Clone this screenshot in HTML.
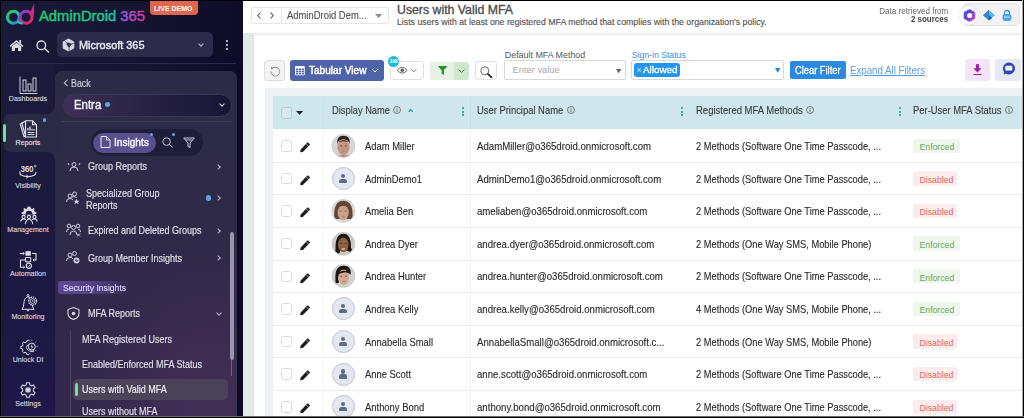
<!DOCTYPE html>
<html><head><meta charset="utf-8">
<style>
*{box-sizing:border-box;margin:0;padding:0}
html,body{width:1024px;height:418px;overflow:hidden;background:#fff;font-family:"Liberation Sans",sans-serif;position:relative}
.a{position:absolute}
.t{position:absolute;white-space:nowrap;line-height:1}
svg{position:absolute;overflow:visible}
/* sidebar */
#sb{position:absolute;left:0;top:0;width:243px;height:418px;background:linear-gradient(90deg,#1a1a39 0%,#151431 55%,#0e0c28 100%)}
#rail{position:absolute;left:0;top:64px;width:55px;height:354px;background:linear-gradient(180deg,#1b1a3a 0%,#1d1942 60%,#1f1848 100%)}
#panel{position:absolute;left:55px;top:71px;width:182px;height:350px;border-radius:7px 7px 0 0;background:radial-gradient(ellipse 120px 160px at 85% 95%,rgba(95,60,105,0.35),rgba(95,60,105,0) 100%),linear-gradient(180deg,#2c2b46 0%,#2f2a48 40%,#32294b 75%,#33294d 100%)}
#tile{position:absolute;left:4px;top:114px;width:56px;height:38px;border-radius:6px 0 0 6px;background:#2b2a45}
.rl{position:absolute;left:0;width:56px;text-align:center;font-size:7.1px;color:#d2d1de;line-height:1;white-space:nowrap;-webkit-text-stroke:0.15px #d2d1de}
.ni{position:absolute;font-size:10px;margin-top:-0.4px;transform:scaleX(0.9);transform-origin:left center;-webkit-text-stroke-width:0.15px;color:#e0dfe9;line-height:1;white-space:nowrap}
.chev{position:absolute;width:4px;height:4px;border-right:1.2px solid #b9b7c8;border-top:1.2px solid #b9b7c8;transform:rotate(45deg)}
/* content */
#hdr{position:absolute;left:243px;top:0;width:781px;height:33px;background:#fff;box-shadow:0 1px 2px rgba(0,0,0,.07)}
#cbg{position:absolute;left:243px;top:33px;width:11px;height:385px;background:#e3e8eb}
#tbox{position:absolute;left:265px;top:88px;width:759px;height:330px;background:#eef1f4}
#thead{position:absolute;left:273px;top:96px;width:751px;height:33px;background:#cfe6ee}
.row{position:absolute;left:273px;width:751px;height:33px;background:#fff;border-top:1px solid #e8ebee}
.cell{position:absolute;white-space:nowrap;line-height:1;color:#333;font-size:9.5px}
.hd{position:absolute;white-space:nowrap;line-height:1;color:#3d3d3d;font-size:9.4px}
.cb{position:absolute;width:11px;height:11px;border:1px solid #d2d2d2;border-radius:2px;background:#fff}
.badge{position:absolute;height:14px;line-height:14px;font-size:8.7px;padding:0 5px;border-radius:2px}
.en{background:#eef6ea;color:#6aa85c}
.di{background:#fdeeee;color:#e0665f}
.kb{position:absolute;width:2px}
.kb i{display:block;width:2px;height:2px;border-radius:1px;background:#1a9a8e;margin-bottom:1.5px}
</style></head><body>
<div id="sb">
  <!-- logo -->
  <svg style="left:0;top:0" width="40" height="30" viewBox="0 0 40 30">
    <defs>
      <linearGradient id="lg1" x1="0" y1="0" x2="0.9" y2="1"><stop offset="0" stop-color="#25c765"/><stop offset="0.55" stop-color="#1ec9a0"/><stop offset="1" stop-color="#3d6fd8"/></linearGradient>
      <linearGradient id="lg2" x1="0" y1="0" x2="1" y2="1"><stop offset="0" stop-color="#7a44d8"/><stop offset="0.5" stop-color="#c42aa0"/><stop offset="1" stop-color="#e52650"/></linearGradient>
    </defs>
    <circle cx="13.4" cy="17.3" r="6" fill="none" stroke="url(#lg1)" stroke-width="3"/>
    <circle cx="26.1" cy="17.3" r="6" fill="none" stroke="url(#lg2)" stroke-width="3"/>
    <path d="M30.3 13 C31.5 10 32.2 7 34.3 3.8 C33.6 8 34.6 12 33.5 17.5 Z" fill="#d42a7a"/>
    <path d="M17.6 21.2 Q19.6 23.6 22.6 23.2" fill="none" stroke="#22c8a8" stroke-width="2.4"/>
  </svg>
  <svg style="left:38px;top:5px" width="112" height="22" viewBox="0 0 112 22"><defs><linearGradient id="lgt" gradientUnits="userSpaceOnUse" x1="0" y1="0" x2="108" y2="0"><stop offset="0" stop-color="#25cb6a"/><stop offset="0.5" stop-color="#1cc98a"/><stop offset="0.74" stop-color="#14c0a8"/><stop offset="0.78" stop-color="#8f58de"/><stop offset="1" stop-color="#e2369c"/></linearGradient></defs><text x="1" y="16" font-family="Liberation Sans" font-size="14.6" fill="url(#lgt)" stroke="url(#lgt)" stroke-width="0.45" textLength="106" lengthAdjust="spacingAndGlyphs">AdminDroid 365</text></svg>
  <div class="a" style="left:150px;top:0;width:48px;height:15px;background:#e0664f;border-radius:0 0 4px 4px"></div>
  <div class="t" style="left:154px;top:4.5px;font-size:7px;font-weight:bold;color:#fff">LIVE DEMO</div>
  <!-- top bar -->
  <svg style="left:9px;top:38.8px" width="15" height="12" viewBox="0 0 15 12"><path d="M7.5 1 L14.5 7 L13.2 7.9 L7.5 3.1 L1.8 7.9 L0.5 7 Z" fill="#d8d7e2"/><rect x="10.3" y="1" width="1.8" height="3.5" fill="#d8d7e2"/><path d="M2.8 7.5 L7.5 3.8 L12.2 7.5 V12 H9 V9 H6 V12 H2.8 Z" fill="#d8d7e2"/></svg>
  <svg style="left:35.5px;top:39.5px" width="14" height="12" viewBox="0 0 14 12"><circle cx="5.3" cy="5.3" r="4.3" fill="none" stroke="#e6e5ee" stroke-width="1.3"/><path d="M8.5 8.5 L12.5 12" stroke="#e6e5ee" stroke-width="1.4" stroke-linecap="round"/></svg>
  <div class="a" style="left:57px;top:32px;width:156px;height:25px;border-radius:5px;background:#2d2b4c"></div>
  <svg style="left:61.5px;top:37.8px" width="13" height="14" viewBox="0 0 13 14"><path d="M6.5 0.6 Q7 0.6 7.5 0.9 L11.6 3.3 Q12.3 3.7 12.3 4.5 V9.5 Q12.3 10.3 11.6 10.7 L7.5 13.1 Q6.5 13.6 5.5 13.1 L1.4 10.7 Q0.7 10.3 0.7 9.5 V4.5 Q0.7 3.7 1.4 3.3 L5.5 0.9 Q6 0.6 6.5 0.6 Z" fill="#d6d5e0"/><path d="M4.6 5.2 Q4.6 4.6 5.2 4.6 L9.3 5.6 Q9.9 5.8 9.6 6.3 L7.4 9.6 Q7 10.1 6.6 9.6 L4.7 6.2 Z" fill="#2d2b4c"/><path d="M4.8 4.8 L2.6 2.6 M9.5 5.9 L12.3 5.4 M7 9.9 L7.2 13.3" stroke="#2d2b4c" stroke-width="0.7"/></svg>
  <div class="t" style="left:79px;top:39.6px;font-size:11.8px;-webkit-text-stroke:0.45px #e6e5ee;color:#e6e5ee;transform:scaleX(0.925);transform-origin:left center">Microsoft 365</div>
  <div class="chev" style="left:198.5px;top:41.5px;transform:rotate(135deg);border-color:#b9b7c8"></div>
  <div class="a" style="left:225.5px;top:40px;width:2.4px;height:2.4px;border-radius:50%;background:#e6e5ee"></div>
  <div class="a" style="left:225.5px;top:44px;width:2.4px;height:2.4px;border-radius:50%;background:#e6e5ee"></div>
  <div class="a" style="left:225.5px;top:48px;width:2.4px;height:2.4px;border-radius:50%;background:#e6e5ee"></div>
  <div class="a" style="left:7px;top:63px;width:229px;height:1px;background:#2a2947"></div>
</div>
<div id="rail"></div>
<div id="panel"></div>
<div id="tile"></div>
<div class="a" style="left:47px;top:106px;width:8px;height:8px;background:radial-gradient(circle at 0 0,#1b1a3b 7.5px,#2b2a45 8px)"></div>
<div class="a" style="left:47px;top:152px;width:8px;height:8px;background:radial-gradient(circle at 0 100%,#1c1a3d 7.5px,#2b2a45 8px)"></div>
<div class="a" style="left:3px;top:124px;width:3px;height:18px;border-radius:2px;background:#6ee19a"></div>
<div class="a" style="left:42.6px;top:118.3px;width:3.6px;height:3.6px;border-radius:50%;background:#5aa6e8"></div>
<!-- rail icons -->
<svg style="left:18.5px;top:76px" width="19" height="18" viewBox="0 0 19 18" fill="none" stroke="#d0cfdc" stroke-width="1"><path d="M1 0.5 V17.5 H18.5"/><rect x="4" y="4" width="3" height="11"/><rect x="9" y="8" width="3" height="7"/><rect x="14" y="2" width="3" height="13"/></svg>
<div class="rl" style="top:96px">Dashboards</div>
<svg style="left:18.5px;top:120px" width="19" height="18" viewBox="0 0 19 18" fill="none" stroke="#e4e3ee" stroke-width="1.1"><path d="M4.5 2.5 L1.2 4 L5 16.5 L7 15.8"/><path d="M6 1.5 L2.8 3 L6.5 15.5"/><path d="M6.5 0.8 H13.5 L17.5 4.8 V17 H6.5 Z" fill="#2b2a45"/><path d="M13.5 0.8 V4.8 H17.5"/><path d="M9 10.5 V8 M11 10.5 V6.5 M13 10.5 V8.8 M15 10.5 V9" stroke-width="1.3"/><path d="M8.5 12.5 H15.5 M8.5 14.5 H15.5" stroke-width="0.9"/></svg>
<div class="rl" style="top:140px;color:#e6e5ee">Reports</div>
<svg style="left:18px;top:164px" width="20" height="15" viewBox="0 0 20 15" fill="none" stroke="#dddce8" stroke-width="1.1"><text x="2.6" y="8" font-size="8.2" font-weight="bold" fill="#dddce8" stroke="none" font-family="Liberation Sans" letter-spacing="-0.3">360</text><circle cx="17.3" cy="2" r="0.9" stroke-width="0.7"/><path d="M2 7.5 Q0.5 11.8 9.5 12.6 Q18.5 12 18 8"/><path d="M8.3 11 L10.2 12.6 L8.3 14.2" stroke-width="1"/></svg>
<div class="rl" style="top:183px">Visibility</div>
<svg style="left:19.5px;top:206px" width="18" height="19" viewBox="0 0 18 19"><path d="M9 0.6 L10.4 0.8 L10.8 2.4 L12.2 3 L13.6 2.1 L14.7 3 L14 4.5 L14.7 5.8 L16.3 6.2 L16.5 7.6 L15 8.4 H3 L1.5 7.6 L1.7 6.2 L3.3 5.8 L4 4.5 L3.3 3 L4.4 2.1 L5.8 3 L7.2 2.4 L7.6 0.8 Z" fill="#dddce8"/><path d="M5.5 8.6 Q5.5 4.8 9 4.8 Q12.5 4.8 12.5 8.6 Z" fill="#1c1a3d"/><g fill="none" stroke="#dddce8" stroke-width="1.1"><circle cx="3.6" cy="11" r="1.6"/><circle cx="9" cy="11" r="1.6"/><circle cx="14.4" cy="11" r="1.6"/><path d="M0.6 15.5 Q1.2 13 3.6 13 Q5 13 5.8 14"/><path d="M17.4 15.5 Q16.8 13 14.4 13 Q13 13 12.2 14"/><path d="M5.3 18.3 Q5.8 13.2 9 13.2 Q12.2 13.2 12.7 18.3"/></g></svg>
<div class="rl" style="top:227px">Management</div>
<svg style="left:18.6px;top:249.5px" width="19" height="19" viewBox="0 0 19 19" fill="none" stroke="#dddce8" stroke-width="1.1"><rect x="6.4" y="1.2" width="5.4" height="4.5" fill="#dddce8" stroke="none"/><path d="M0.8 3.5 H5.2"/><path d="M3.8 2.3 L5.3 3.5 L3.8 4.7" stroke-width="0.9"/><path d="M13 3.5 H17 V10 H14"/><path d="M15.3 8.8 L14 10 L15.3 11.2" stroke-width="0.9"/><rect x="6.5" y="7.5" width="5.2" height="4.4" rx="0.8"/><path d="M6.4 10 H1.5 V17.2 H5.5"/><path d="M4.3 16 L5.6 17.2 L4.3 18.4" stroke-width="0.9"/><circle cx="9.8" cy="15.8" r="2.6"/><path d="M8.6 15.8 L9.5 16.7 L11.6 14.6" stroke-width="0.9"/></svg>
<div class="rl" style="top:270.5px">Automation</div>
<svg style="left:19.5px;top:294px" width="19" height="18" viewBox="0 0 19 18" fill="none" stroke="#dddce8" stroke-width="1"><circle cx="8" cy="1.6" r="1"/><path d="M2 15.3 Q3.6 13.5 3.8 10 Q4 3.5 8 2.8 Q12 3.5 12.2 10 Q12.4 13.5 14 15.3 Z"/><path d="M6.8 16.4 Q8 17.6 9.2 16.4"/><circle cx="12.6" cy="7" r="4" fill="#1d1942" stroke-dasharray="1.6 0.7" stroke-width="1.2"/><circle cx="12.6" cy="7" r="2.4" stroke-width="0.8"/><path d="M12.4 5.8 V7.2 H13.6" stroke-width="0.8"/></svg>
<div class="rl" style="top:313.5px">Monitoring</div>
<svg style="left:18.5px;top:339px" width="20" height="16" viewBox="0 0 20 16" fill="none" stroke="#dddce8" stroke-width="1"><path d="M10.5 2.2 L9.5 1 L7.5 1.8 L7.4 3.2 L6 3.8 L4.8 3 L3.3 4.4 L4 5.8 L3.4 7.2 L1.8 7.5 L1.8 9.5 L3.4 9.8 L4 11.2 L3.3 12.6 L4.8 14 L6 13.2 L7.4 13.8 L7.5 15.2 L9.5 15.8 L10.5 14.5"/><path d="M9.8 5.5 Q7.5 6.5 7.5 8.5 Q7.5 10.5 9.8 11.5"/><circle cx="12.8" cy="7.6" r="3.5"/><path d="M11.2 11 V12.6 H14.4 V11"/><path d="M12.9 5.6 L12 8 L13.6 7.4 L12.7 9.8" stroke-width="0.8"/><path d="M12.8 1.8 V0.8 M16.3 3.5 L17.2 2.7 M17.6 7.6 H18.8 M16.3 11.3 L17.2 12 M9.3 3.5 L8.6 2.9" stroke-width="0.8"/></svg>
<div class="rl" style="top:357px">Unlock DI</div>
<svg style="left:20px;top:382px" width="16" height="16" viewBox="0 0 16 16" fill="none" stroke="#d0cfdc" stroke-width="1.1"><path d="M6.6 0.8 H9.4 L9.9 2.9 L11.6 3.8 L13.6 3 L15 5.4 L13.4 6.8 V9.2 L15 10.6 L13.6 13 L11.6 12.2 L9.9 13.1 L9.4 15.2 H6.6 L6.1 13.1 L4.4 12.2 L2.4 13 L1 10.6 L2.6 9.2 V6.8 L1 5.4 L2.4 3 L4.4 3.8 L6.1 2.9 Z"/><circle cx="8" cy="8" r="2.8" fill="#d0cfdc" stroke="none"/></svg>
<div class="rl" style="top:400.5px">Settings</div>

<!-- panel contents -->
<div class="chev" style="left:64.5px;top:81px;transform:rotate(-135deg);width:4.5px;height:4.5px;border-color:#c8c6d4"></div>
<div class="t" style="left:70.5px;top:78.6px;font-size:10.4px;color:#cfcddb;-webkit-text-stroke:0.2px #cfcddb;transform:scaleX(0.85);transform-origin:left center">Back</div>
<div class="a" style="left:63px;top:93.5px;width:169px;height:23px;border-radius:12px;background:linear-gradient(90deg,#3e2f57 0%,#2b2547 40%,#171535 100%);border:1px solid #3a3656"></div>
<div class="t" style="left:74px;top:98.8px;font-size:12px;-webkit-text-stroke:0.5px #ecebf3;color:#ecebf3;transform:scaleX(0.95);transform-origin:left center">Entra</div>
<div class="a" style="left:105.3px;top:102.4px;width:5px;height:5px;border-radius:50%;background:#5aa6e8"></div>
<div class="chev" style="left:220px;top:101.5px;transform:rotate(135deg);border-color:#d0cfdc"></div>
<div class="a" style="left:61px;top:121px;width:171px;height:1px;background:#3d3b57"></div>
<!-- list items (under pill) -->
<svg style="left:66.5px;top:162px" width="14" height="9" viewBox="0 0 14 9" fill="none" stroke="#cfcde0" stroke-width="1"><circle cx="7" cy="2.5" r="2"/><path d="M3 9 Q3 5 7 5 Q11 5 11 9"/><path d="M1 1 L2 3 M13 1 L12 3"/></svg>
<div class="ni" style="left:87.5px;top:162px">Group Reports</div>
<div class="chev" style="left:215.5px;top:164.5px"></div>
<svg style="left:66px;top:190.5px" width="14" height="14" viewBox="0 0 14 14" fill="none" stroke="#cfcde0" stroke-width="1"><circle cx="4" cy="5" r="2"/><circle cx="8.5" cy="3" r="2"/><path d="M0.5 11 Q0.5 7.5 4 7.5 Q6 7.5 7 9 M6 6 Q8 5 10.5 6.5"/><path d="M10.5 7.5 L11.3 9.7 L13.6 9.7 L11.8 11 L12.5 13.3 L10.5 11.9 L8.5 13.3 L9.2 11 L7.4 9.7 L9.7 9.7 Z" fill="#cfcde0" stroke="none"/></svg>
<div class="ni" style="left:86px;top:189px">Specialized Group</div>
<div class="ni" style="left:86px;top:201px">Reports</div>
<div class="a" style="left:206px;top:195.3px;width:5.4px;height:5.4px;border-radius:50%;background:#5aa6e8"></div>
<div class="chev" style="left:215.5px;top:196px"></div>
<svg style="left:66px;top:223px" width="15" height="14" viewBox="0 0 15 14" fill="none" stroke="#cfcde0" stroke-width="1"><circle cx="3" cy="3" r="1.8"/><circle cx="7.5" cy="4.5" r="2"/><circle cx="12" cy="3" r="1.8"/><path d="M0.5 9 Q0.5 6 3 6 M4 12 Q4 8 7.5 8 Q11 8 11 12 M14.5 9 Q14.5 6 12 6"/><path d="M11 10.5 L14 13.5 M14 10.5 L11 13.5"/></svg>
<div class="ni" style="left:87.5px;top:226.5px">Expired and Deleted Groups</div>
<div class="chev" style="left:215.5px;top:228.5px"></div>
<svg style="left:66px;top:251px" width="14" height="13" viewBox="0 0 14 13" fill="none" stroke="#cfcde0" stroke-width="1"><circle cx="4" cy="4" r="2"/><circle cx="8.5" cy="2.5" r="2"/><path d="M0.5 10 Q0.5 6.5 4 6.5 Q6 6.5 7 8"/><circle cx="10.5" cy="9.5" r="3" fill="#cfcde0" stroke="none"/><path d="M8.8 9.6 H9.8 L10.3 8.5 L10.9 10.6 L11.4 9.6 H12.3" stroke="#2e2946" stroke-width="0.8"/></svg>
<div class="ni" style="left:87.5px;top:254.5px">Group Member Insights</div>
<div class="chev" style="left:215.5px;top:256px"></div>
<!-- insights pill -->
<div class="a" style="left:90.5px;top:129px;width:112px;height:27px;border-radius:14px;background:#1f1d3a"></div>
<div class="a" style="left:92.7px;top:132.5px;width:63px;height:20.5px;border-radius:10.5px;background:#5a4f8e"></div>
<svg style="left:100px;top:135.5px" width="11" height="12" viewBox="0 0 11 12" fill="none" stroke="#e6e3f3" stroke-width="1"><path d="M1 0.5 H6.5 L10 4 V11.5 H1 Z M6.5 0.5 V4 H10"/></svg>
<div class="t" style="left:114px;top:137px;font-size:10.6px;-webkit-text-stroke:0.45px #f1eff8;color:#f1eff8;transform:scaleX(0.955);transform-origin:left center">Insights</div>
<div class="a" style="left:149.5px;top:132.5px;width:3.6px;height:3.6px;border-radius:50%;background:#5aa6e8"></div>
<svg style="left:161.5px;top:137px" width="12" height="11" viewBox="0 0 12 11" fill="none" stroke="#c9c7d8" stroke-width="1"><circle cx="4.6" cy="4.6" r="3.8"/><path d="M7.5 7.5 L10.8 10.5"/></svg>
<div class="a" style="left:171.7px;top:132.5px;width:3.6px;height:3.6px;border-radius:50%;background:#5aa6e8"></div>
<svg style="left:183px;top:137px" width="12" height="11" viewBox="0 0 12 11" fill="none" stroke="#c9c7d8" stroke-width="1"><path d="M0.7 1 H11.3 L7 6 V10.5 L5 9.5 V6 Z M2.5 3 H9.5"/></svg>
<!-- security insights -->
<div class="a" style="left:58px;top:281px;width:72px;height:13px;border-radius:3px;background:linear-gradient(90deg,#5d4892 0%,#54428a 45%,rgba(80,62,130,0.35) 85%,rgba(80,62,130,0) 100%)"></div>
<div class="ni" style="left:62.5px;top:283.5px;font-size:9.5px;margin-top:-0.76px;transform:scaleX(0.905);color:#ddd6f2">Security Insights</div>
<svg style="left:67px;top:307px" width="13" height="13" viewBox="0 0 13 13" fill="none" stroke="#d8d6e4" stroke-width="1.1"><path d="M6.5 0.6 L12 2.6 V6.5 Q12 10.8 6.5 12.4 Q1 10.8 1 6.5 V2.6 Z"/><circle cx="6.5" cy="6.5" r="1.8" fill="#d8d6e4" stroke="none"/></svg>
<div class="ni" style="left:87.5px;top:309.5px">MFA Reports</div>
<div class="chev" style="left:216.5px;top:310.5px;transform:rotate(135deg)"></div>
<div class="a" style="left:69.5px;top:331px;width:1px;height:90px;background:#484360"></div>
<div class="ni" style="left:81.5px;top:335.5px">MFA Registered Users</div>
<div class="ni" style="left:81.5px;top:360.5px">Enabled/Enforced MFA Status</div>
<div class="a" style="left:72.7px;top:378.5px;width:155px;height:21px;border-radius:5px;background:linear-gradient(90deg,#4d4459,#4a4258)"></div>
<div class="a" style="left:75.3px;top:382.7px;width:3px;height:13px;border-radius:2px;background:#6ee19a"></div>
<div class="ni" style="left:81.5px;top:385px;color:#f0eff6">Users with Valid MFA</div>
<div class="ni" style="left:81.5px;top:407.2px">Users without MFA</div>
<!-- scrollbar -->
<div class="a" style="left:230.5px;top:232px;width:1px;height:144px;background:#6b6880"></div>
<div class="a" style="left:230px;top:232px;width:3.5px;height:128px;border-radius:2px;background:#9996aa"></div>
<div class="a" style="left:237px;top:64px;width:6px;height:354px;background:#0e0b27"></div>

<div class="a" style="left:243px;top:0px;width:781.00px;height:33.00px;background:#fff"></div>
<div class="a" style="left:243px;top:33px;width:781.00px;height:4.00px;background:linear-gradient(180deg,#ededed,#f5f5f5 40%,#fcfcfc 80%,#fff)"></div>
<div class="a" style="left:251px;top:6.5px;width:137.50px;height:17.00px;border:1px solid #e4e4e4;border-radius:3px;background:#fff"></div>
<div class="a" style="left:280.5px;top:7px;width:1.00px;height:16.00px;background:#e8e8e8"></div>
<svg style="left:256.5px;top:12px" width="4" height="7" viewBox="0 0 4 7" ><path d="M3.5 0.5 L0.8 3.5 L3.5 6.5" fill="none" stroke="#555" stroke-width="1.1"/></svg>
<svg style="left:270px;top:12px" width="4" height="7" viewBox="0 0 4 7" ><path d="M0.5 0.5 L3.2 3.5 L0.5 6.5" fill="none" stroke="#555" stroke-width="1.1"/></svg>
<div class="t" style="left:287.00px;top:10.57px;font-size:10.2px;color:#505050;-webkit-text-stroke:0.12px #505050;transform:scaleX(0.9249);transform-origin:left center;">AdminDroid Dem...</div>
<svg style="left:375px;top:14px" width="7" height="4" viewBox="0 0 7 4" ><path d="M0 0 H7 L3.5 4 Z" fill="#8a8a8a"/></svg>
<div class="t" style="left:397.00px;top:3.59px;font-size:12.3px;color:#4e4e4e;-webkit-text-stroke:0.35px #4e4e4e;">Users with Valid MFA</div>
<div class="t" style="left:397.00px;top:17.58px;font-size:8.76px;color:#505050;-webkit-text-stroke:0.12px #505050;">Lists users with at least one registered MFA method that complies with the organization's policy.</div>
<div class="t" style="right:75.60px;top:6.85px;font-size:8.8px;color:#666;transform:scaleX(0.9164);transform-origin:right center;">Data retrieved from</div>
<div class="t" style="right:75.60px;top:15.45px;font-size:8.8px;color:#444;font-weight:bold;transform:scaleX(0.9056);transform-origin:right center;">2 sources</div>
<div class="a" style="left:962.5px;top:3.2px;width:57.50px;height:22.40px;background:#f2f2f4;border:1px solid #e2e2e6;border-radius:5px"></div>
<div class="a" style="left:959.3px;top:6px;width:19.20px;height:19.00px;background:#fff;border-radius:50%;box-shadow:0 0 2px rgba(0,0,0,.18)"></div>
<svg style="left:962.5px;top:8.8px" width="13" height="13" viewBox="0 0 13 13" ><defs><linearGradient id="m3" x1="0" y1="0" x2="1" y2="1"><stop offset="0" stop-color="#2a5fe0"/><stop offset=".45" stop-color="#6a3fd8"/><stop offset="1" stop-color="#d04ab8"/></linearGradient></defs><path d="M6.5 0.4 L11.9 3.5 V9.5 L6.5 12.6 L1.1 9.5 V3.5 Z" fill="url(#m3)" stroke="url(#m3)" stroke-width="0.8" stroke-linejoin="round"/><circle cx="6.6" cy="6.5" r="2.5" fill="#fff"/><path d="M8.8 4.9 L11.9 3.5 V6.2 Z" fill="#9b6ce8"/></svg>
<svg style="left:983px;top:10px" width="12" height="10.5" viewBox="0 0 12 10.5" ><path d="M6 0 L12 5.3 L6 10.5 L0 5.3 Z" fill="#5bb8ee"/><path d="M6 0 L6 10.5 L0 5.3 Z" fill="#2f86d0"/><path d="M6 5 L9 8 L6 10.5 Z" fill="#1a5fa8"/></svg>
<svg style="left:1001.7px;top:9.6px" width="10" height="11.2" viewBox="0 0 10 11.2" ><path d="M2.5 4.5 V3 Q2.5 0.5 5 0.5 Q7.5 0.5 7.5 3 V4.5" fill="none" stroke="#3a8fd8" stroke-width="1.3"/><rect x="0.5" y="4" width="9" height="7" rx="2.5" fill="#4aa3e8"/><rect x="2" y="6.5" width="6" height="1.2" fill="#b8e0ff"/></svg>
<div class="a" style="left:243px;top:33px;width:11.00px;height:385.00px;background:#e3e8eb"></div>
<div class="a" style="left:264.2px;top:60.2px;width:20.50px;height:21.30px;background:#f3f3f3;border:1px solid #dcdcdc;border-radius:3px"></div>
<svg style="left:269.5px;top:65.5px" width="11" height="11" viewBox="0 0 11 11" ><path d="M2.3 2.4 A4.4 4.4 0 1 1 0.9 5.4" fill="none" stroke="#8c8c8c" stroke-width="0.9"/><path d="M0.6 1.2 L3.4 1.4 L1.6 3.6 Z" fill="#777"/></svg>
<div class="a" style="left:290.3px;top:60px;width:93.50px;height:20.80px;background:#4f64a8;border-radius:3px"></div>
<svg style="left:295.2px;top:66px" width="9.8" height="9.2" viewBox="0 0 9.8 9.2" ><rect x="0" y="0" width="9.8" height="9.2" rx="1" fill="#fff"/><rect x="0.9" y="2.6" width="2.3" height="1.6" fill="#4f64a8"/><rect x="3.8" y="2.6" width="2.3" height="1.6" fill="#4f64a8"/><rect x="6.7" y="2.6" width="2.3" height="1.6" fill="#4f64a8"/><rect x="0.9" y="4.8" width="2.3" height="1.6" fill="#4f64a8"/><rect x="3.8" y="4.8" width="2.3" height="1.6" fill="#4f64a8"/><rect x="6.7" y="4.8" width="2.3" height="1.6" fill="#4f64a8"/><rect x="0.9" y="7" width="2.3" height="1.4" fill="#4f64a8"/><rect x="3.8" y="7" width="2.3" height="1.4" fill="#4f64a8"/><rect x="6.7" y="7" width="2.3" height="1.4" fill="#4f64a8"/></svg>
<div class="t" style="left:308.60px;top:65.43px;font-size:10.6px;color:#fff;-webkit-text-stroke:0.45px #fff;transform:scaleX(0.9493);transform-origin:left center;">Tabular View</div>
<svg style="left:372px;top:68.5px" width="6" height="3.6" viewBox="0 0 6 3.6" ><path d="M0.4 0.4 L3 3 L5.6 0.4" fill="none" stroke="#fff" stroke-width="1"/></svg>
<div class="a" style="left:390px;top:61.2px;width:33.80px;height:19.10px;background:#fff;border:1px solid #e0e0e0;border-radius:3px"></div>
<svg style="left:396.5px;top:67.3px" width="10.5" height="6.5" viewBox="0 0 10.5 6.5" ><path d="M0.3 3.25 Q5.25 -2.5 10.2 3.25 Q5.25 9 0.3 3.25 Z" fill="none" stroke="#555" stroke-width="0.9"/><circle cx="5.25" cy="3.25" r="1.7" fill="#555"/></svg>
<svg style="left:411px;top:69px" width="5.6" height="3.4" viewBox="0 0 5.6 3.4" ><path d="M0.4 0.4 L2.8 2.8 L5.2 0.4" fill="none" stroke="#666" stroke-width="0.9"/></svg>
<div class="a" style="left:387.8px;top:55.5px;width:11.00px;height:11.00px;background:#1dbad6;border-radius:50%"></div>
<div class="t" style="left:389.60px;top:58.87px;font-size:5px;color:#fff;font-weight:bold;letter-spacing:-0.2px;">198</div>
<div class="a" style="left:430.2px;top:62px;width:39.00px;height:18.00px;background:#cfe7cc;border-radius:3px"></div>
<div class="a" style="left:430.2px;top:62px;width:23.80px;height:18.00px;background:#e6f2e4;border-radius:3px 0 0 3px"></div>
<svg style="left:438px;top:66.4px" width="9.5" height="9" viewBox="0 0 9.5 9" ><path d="M0 0 H9.5 L5.9 4.2 V9 L3.6 7.6 V4.2 Z" fill="#23922f"/></svg>
<svg style="left:457.5px;top:69.2px" width="7" height="4" viewBox="0 0 7 4" ><path d="M0.5 0.5 L3.5 3.3 L6.5 0.5" fill="none" stroke="#5a7a5a" stroke-width="1"/></svg>
<div class="a" style="left:475px;top:60.8px;width:22.00px;height:19.50px;background:#fff;border:1px solid #e0e0e0;border-radius:3px"></div>
<svg style="left:479.5px;top:65.6px" width="12.5" height="12" viewBox="0 0 12.5 12" ><circle cx="4.8" cy="4.8" r="4" fill="none" stroke="#555" stroke-width="0.9"/><path d="M7.9 7.9 L11.4 11.2" stroke="#333" stroke-width="1.9" stroke-linecap="round"/></svg>
<div class="t" style="left:504.80px;top:50.77px;font-size:8.9px;color:#555;">Default MFA Method</div>
<div class="a" style="left:504px;top:60.2px;width:121.60px;height:20.30px;background:#fff;border:1px solid #d8d8d8;border-radius:2px"></div>
<div class="t" style="left:512.60px;top:65.63px;font-size:9.3px;color:#a8a8a8;">Enter value</div>
<svg style="left:615.8px;top:68.8px" width="5.4" height="4.2" viewBox="0 0 5.4 4.2" ><path d="M0 0 H5.4 L2.7 4.2 Z" fill="#666"/></svg>
<div class="t" style="left:631.70px;top:50.94px;font-size:8.7px;color:#3a8ee6;">Sign-in Status</div>
<div class="a" style="left:630.5px;top:60.2px;width:153.90px;height:20.30px;background:#fff;border:1px solid #d8d8d8;border-radius:2px"></div>
<div class="a" style="left:633.6px;top:62.7px;width:46.20px;height:14.30px;background:#2196f3;border-radius:3px"></div>
<div class="t" style="left:636.60px;top:66.02px;font-size:8.6px;color:#cfe6ff;">×</div>
<div class="t" style="left:642.50px;top:65.51px;font-size:9.2px;color:#fff;-webkit-text-stroke:0.3px #fff;transform:scaleX(1.0718);transform-origin:left center;">Allowed</div>
<svg style="left:774.7px;top:67.7px" width="5.5" height="4.7" viewBox="0 0 5.5 4.7" ><path d="M0 0 H5.5 L2.75 4.7 Z" fill="#1e88e5"/></svg>
<div class="a" style="left:789.9px;top:60.8px;width:56.00px;height:18.60px;background:#2a8ae0;border-radius:2px"></div>
<div class="t" style="left:794.90px;top:66.03px;font-size:10px;color:#fff;-webkit-text-stroke:0.3px #fff;transform:scaleX(0.9304);transform-origin:left center;">Clear Filter</div>
<div class="t" style="left:849.50px;top:66.37px;font-size:10.2px;color:#5b9be6;text-decoration:underline;transform:scaleX(0.9528);transform-origin:left center;">Expand All Filters</div>
<div class="a" style="left:964.6px;top:59.4px;width:25.00px;height:21.40px;background:#f3e5f6;border-radius:3px"></div>
<svg style="left:972.6px;top:63.8px" width="9" height="11.2" viewBox="0 0 9 11.2" ><rect x="3" y="0.2" width="3" height="5" fill="#a21cb0"/><path d="M0.4 4.2 H8.6 L4.5 8.4 Z" fill="#a21cb0"/><rect x="0.3" y="10" width="8.4" height="1.1" rx="0.5" fill="#a21cb0"/></svg>
<div class="a" style="left:995px;top:59.4px;width:25.60px;height:21.40px;background:#e5e9f4;border-radius:3px"></div>
<svg style="left:1002px;top:62.4px" width="13.5" height="13" viewBox="0 0 13.5 13" ><path d="M6.9 0.4 A6.2 6 0 1 1 4.2 11.8 L1.6 12.6 L2.4 10.2 A6.2 6 0 0 1 6.9 0.4 Z" fill="#3044b2"/><rect x="3.3" y="3.7" width="7" height="4.8" rx="0.8" fill="#fff"/><path d="M3.8 4.3 L6.8 6.3 L9.8 4.3" fill="none" stroke="#9aa6e0" stroke-width="0.7"/></svg>
<div class="a" style="left:265px;top:88.3px;width:757.00px;height:329.70px;background:#eef1f4"></div>
<div class="a" style="left:273.3px;top:96px;width:748.70px;height:33.00px;background:#cfe6ee"></div>
<div class="a" style="left:323px;top:96.5px;width:1.00px;height:32.70px;background:#c9e1e9"></div>
<div class="a" style="left:469.5px;top:96.5px;width:1.50px;height:32.70px;background:linear-gradient(90deg,#c2dae3,#cbe2ea)"></div>
<div class="a" style="left:280.5px;top:107.2px;width:11.50px;height:11.50px;background:#d3e8ef;border:1.2px solid #b8ccd3;border-radius:2.5px"></div>
<svg style="left:296.4px;top:111.2px" width="7.2" height="3.8" viewBox="0 0 7.2 3.8" ><path d="M0 0 H7.2 L3.6 3.8 Z" fill="#222"/></svg>
<div class="t" style="left:331.90px;top:105.78px;font-size:10.3px;color:#383838;-webkit-text-stroke:0.1px #383838;transform:scaleX(0.9049);transform-origin:left center;">Display Name</div>
<svg style="left:392.8px;top:106.4px" width="8" height="8" viewBox="0 0 8 8" ><circle cx="4" cy="4" r="3.5" fill="none" stroke="#555" stroke-width="0.75"/><path d="M4 3.4 V6.2" stroke="#555" stroke-width="0.85"/><circle cx="4" cy="2.2" r="0.5" fill="#555"/></svg>
<svg style="left:408px;top:109px" width="5.4" height="3.4" viewBox="0 0 5.4 3.4" ><path d="M0.4 3 L2.7 0.6 L5 3" fill="none" stroke="#1a9a8e" stroke-width="1.1"/></svg>
<div class="a" style="left:462.2px;top:107.2px;width:2.20px;height:2.20px;background:#15998c;border-radius:50%"></div>
<div class="a" style="left:462.2px;top:110.7px;width:2.20px;height:2.20px;background:#15998c;border-radius:50%"></div>
<div class="a" style="left:462.2px;top:114.2px;width:2.20px;height:2.20px;background:#15998c;border-radius:50%"></div>
<div class="t" style="left:477.20px;top:105.78px;font-size:10.3px;color:#383838;-webkit-text-stroke:0.1px #383838;transform:scaleX(0.9129);transform-origin:left center;">User Principal Name</div>
<svg style="left:567px;top:106.4px" width="8" height="8" viewBox="0 0 8 8" ><circle cx="4" cy="4" r="3.5" fill="none" stroke="#555" stroke-width="0.75"/><path d="M4 3.4 V6.2" stroke="#555" stroke-width="0.85"/><circle cx="4" cy="2.2" r="0.5" fill="#555"/></svg>
<div class="a" style="left:680.6999999999999px;top:107.2px;width:2.20px;height:2.20px;background:#15998c;border-radius:50%"></div>
<div class="a" style="left:680.6999999999999px;top:110.7px;width:2.20px;height:2.20px;background:#15998c;border-radius:50%"></div>
<div class="a" style="left:680.6999999999999px;top:114.2px;width:2.20px;height:2.20px;background:#15998c;border-radius:50%"></div>
<div class="t" style="left:695.50px;top:105.78px;font-size:10.3px;color:#383838;-webkit-text-stroke:0.1px #383838;transform:scaleX(0.9229);transform-origin:left center;">Registered MFA Methods</div>
<svg style="left:805.5px;top:106.4px" width="8" height="8" viewBox="0 0 8 8" ><circle cx="4" cy="4" r="3.5" fill="none" stroke="#555" stroke-width="0.75"/><path d="M4 3.4 V6.2" stroke="#555" stroke-width="0.85"/><circle cx="4" cy="2.2" r="0.5" fill="#555"/></svg>
<div class="a" style="left:898.5px;top:107.2px;width:2.20px;height:2.20px;background:#15998c;border-radius:50%"></div>
<div class="a" style="left:898.5px;top:110.7px;width:2.20px;height:2.20px;background:#15998c;border-radius:50%"></div>
<div class="a" style="left:898.5px;top:114.2px;width:2.20px;height:2.20px;background:#15998c;border-radius:50%"></div>
<div class="t" style="left:913.40px;top:105.78px;font-size:10.3px;color:#383838;-webkit-text-stroke:0.1px #383838;transform:scaleX(0.9140);transform-origin:left center;">Per-User MFA Status</div>
<svg style="left:1004.8px;top:106.4px" width="8" height="8" viewBox="0 0 8 8" ><circle cx="4" cy="4" r="3.5" fill="none" stroke="#555" stroke-width="0.75"/><path d="M4 3.4 V6.2" stroke="#555" stroke-width="0.85"/><circle cx="4" cy="2.2" r="0.5" fill="#555"/></svg>
<div class="a" style="left:273.3px;top:129px;width:748.70px;height:289.00px;background:#fff"></div>
<div class="a" style="left:273.3px;top:162px;width:748.70px;height:1.00px;background:#e9ecee"></div>
<div class="a" style="left:273.3px;top:194px;width:748.70px;height:1.00px;background:#e9ecee"></div>
<div class="a" style="left:273.3px;top:227px;width:748.70px;height:1.00px;background:#e9ecee"></div>
<div class="a" style="left:273.3px;top:260px;width:748.70px;height:1.00px;background:#e9ecee"></div>
<div class="a" style="left:273.3px;top:292px;width:748.70px;height:1.00px;background:#e9ecee"></div>
<div class="a" style="left:273.3px;top:325px;width:748.70px;height:1.00px;background:#e9ecee"></div>
<div class="a" style="left:273.3px;top:357px;width:748.70px;height:1.00px;background:#e9ecee"></div>
<div class="a" style="left:273.3px;top:390px;width:748.70px;height:1.00px;background:#e9ecee"></div>
<div class="a" style="left:273.3px;top:423px;width:748.70px;height:1.00px;background:#e9ecee"></div>
<div class="a" style="left:323px;top:129px;width:1.00px;height:289.00px;background:#f4f5f6"></div>
<div class="a" style="left:469.5px;top:129px;width:1.70px;height:289.00px;background:linear-gradient(90deg,#eceeef,#f6f7f8)"></div>
<div class="a" style="left:280.5px;top:140.1px;width:11.50px;height:11.50px;border:1.2px solid #dadada;border-radius:2.5px;background:#fff"></div>
<svg style="left:300.4px;top:142.1px" width="10.4" height="10.4" viewBox="0 0 10.4 10.4" ><path d="M7.3 0.6 Q7.7 0.3 8.1 0.6 L9.8 2.3 Q10.1 2.7 9.8 3.1 L2.8 10 L0.3 10.3 L0.5 7.7 Z" fill="#1e1e1e"/><path d="M6.2 1.8 L8.6 4.2" stroke="#fff" stroke-width="0.6"/></svg>
<svg style="left:328.90000000000003px;top:131.79999999999998px" width="28" height="28" viewBox="0 0 28 28" ><defs><clipPath id="cm1145"><circle cx="14.4" cy="13.9" r="11.4"/></clipPath><filter id="blcm1145" x="-10%" y="-10%" width="120%" height="120%"><feGaussianBlur stdDeviation="0.45"/></filter></defs><g clip-path="url(#cm1145)"><g filter="url(#blcm1145)"><rect width="28" height="28" fill="#d3d5d7"/><path d="M8 12 Q7.5 3.8 14.4 3.8 Q21.5 3.8 20.8 12 Q20 8 14.4 7.6 Q9 8 8 12 Z" fill="#2a201c"/><ellipse cx="14.4" cy="15.2" rx="6.1" ry="8" fill="#c49682"/><path d="M5 28 Q6 23 14.4 23 Q22.8 23 24 28 Z" fill="#a88676"/><path d="M9 10 Q14.4 6.5 20 10 Q14.4 8.6 9 10 Z" fill="#2a201c"/><ellipse cx="12.0" cy="13.8" rx="1.1" ry="0.6" fill="#3a2420" opacity="0.60"/><ellipse cx="16.8" cy="13.8" rx="1.1" ry="0.6" fill="#3a2420" opacity="0.60"/><ellipse cx="14.4" cy="19.0" rx="1.6" ry="0.55" fill="#8a4a40" opacity="0.48"/></g></g><circle cx="14.4" cy="13.9" r="11.4" fill="none" stroke="#c6c8cb" stroke-width="0.9"/></svg>
<div class="t" style="left:364.60px;top:141.98px;font-size:10.3px;color:#2a2a2a;-webkit-text-stroke:0.12px #2a2a2a;transform:scaleX(0.9140);transform-origin:left center;">Adam Miller</div>
<div class="t" style="left:477.20px;top:141.98px;font-size:10.3px;color:#2a2a2a;-webkit-text-stroke:0.12px #2a2a2a;transform:scaleX(0.9350);transform-origin:left center;">AdamMiller@o365droid.onmicrosoft.com</div>
<div class="t" style="left:695.50px;top:141.98px;font-size:10.3px;color:#2a2a2a;-webkit-text-stroke:0.12px #2a2a2a;transform:scaleX(0.9030);transform-origin:left center;">2 Methods (Software One Time Passcode, ...</div>
<div class="a" style="left:913.4px;top:138.6px;width:46.50px;height:14.30px;background:#eff7ec;border-radius:2px"></div>
<div class="t" style="left:919.50px;top:143.14px;font-size:8.7px;color:#66a85a;">Enforced</div>
<div class="a" style="left:280.5px;top:172.72px;width:11.50px;height:11.50px;border:1.2px solid #dadada;border-radius:2.5px;background:#fff"></div>
<svg style="left:300.4px;top:174.72px" width="10.4" height="10.4" viewBox="0 0 10.4 10.4" ><path d="M7.3 0.6 Q7.7 0.3 8.1 0.6 L9.8 2.3 Q10.1 2.7 9.8 3.1 L2.8 10 L0.3 10.3 L0.5 7.7 Z" fill="#1e1e1e"/><path d="M6.2 1.8 L8.6 4.2" stroke="#fff" stroke-width="0.6"/></svg>
<div class="a" style="left:331.8px;top:166.82px;width:23.00px;height:23.00px;background:#e3e7ef;border:1px solid #bfc5cf;border-radius:50%"></div>
<div class="a" style="left:341.2px;top:173.62px;width:4.20px;height:4.20px;background:#5d6b86;border-radius:50%"></div>
<div class="a" style="left:339.1px;top:178.62px;width:8.10px;height:4.40px;background:#5d6b86;border-radius:2.5px 2.5px 1px 1px"></div>
<div class="t" style="left:364.60px;top:174.60px;font-size:10.3px;color:#2a2a2a;-webkit-text-stroke:0.12px #2a2a2a;transform:scaleX(0.9140);transform-origin:left center;">AdminDemo1</div>
<div class="t" style="left:477.20px;top:174.60px;font-size:10.3px;color:#2a2a2a;-webkit-text-stroke:0.12px #2a2a2a;transform:scaleX(0.9350);transform-origin:left center;">AdminDemo1@o365droid.onmicrosoft.com</div>
<div class="t" style="left:695.50px;top:174.60px;font-size:10.3px;color:#2a2a2a;-webkit-text-stroke:0.12px #2a2a2a;transform:scaleX(0.9030);transform-origin:left center;">2 Methods (Software One Time Passcode, ...</div>
<div class="a" style="left:913.4px;top:171.22px;width:44.10px;height:14.30px;background:#fdecec;border-radius:2px"></div>
<div class="t" style="left:919.50px;top:175.76px;font-size:8.7px;color:#e0655e;">Disabled</div>
<div class="a" style="left:280.5px;top:205.34px;width:11.50px;height:11.50px;border:1.2px solid #dadada;border-radius:2.5px;background:#fff"></div>
<svg style="left:300.4px;top:207.34px" width="10.4" height="10.4" viewBox="0 0 10.4 10.4" ><path d="M7.3 0.6 Q7.7 0.3 8.1 0.6 L9.8 2.3 Q10.1 2.7 9.8 3.1 L2.8 10 L0.3 10.3 L0.5 7.7 Z" fill="#1e1e1e"/><path d="M6.2 1.8 L8.6 4.2" stroke="#fff" stroke-width="0.6"/></svg>
<svg style="left:328.90000000000003px;top:197.04px" width="28" height="28" viewBox="0 0 28 28" ><defs><clipPath id="cf1210"><circle cx="14.4" cy="13.9" r="11.4"/></clipPath><filter id="blcf1210" x="-10%" y="-10%" width="120%" height="120%"><feGaussianBlur stdDeviation="0.45"/></filter></defs><g clip-path="url(#cf1210)"><g filter="url(#blcf1210)"><rect width="28" height="28" fill="#dedede"/><path d="M5.3 22 Q3.8 3.8 14.4 3.7 Q25 3.8 23.5 22 Z" fill="#654634"/><ellipse cx="14.2" cy="15.6" rx="5.6" ry="7.6" fill="#caa08a"/><path d="M8.5 11 Q10 7 14.4 7 Q18.5 7 20 11 Q17 8.5 14.4 9 Q11 8.5 8.5 11 Z" fill="#654634"/><ellipse cx="11.8" cy="14.0" rx="1.1" ry="0.6" fill="#4a3028" opacity="0.60"/><ellipse cx="16.6" cy="14.0" rx="1.1" ry="0.6" fill="#4a3028" opacity="0.60"/><ellipse cx="14.2" cy="19.2" rx="1.6" ry="0.55" fill="#8a4a40" opacity="0.48"/></g></g><circle cx="14.4" cy="13.9" r="11.4" fill="none" stroke="#c6c8cb" stroke-width="0.9"/></svg>
<div class="t" style="left:364.60px;top:207.22px;font-size:10.3px;color:#2a2a2a;-webkit-text-stroke:0.12px #2a2a2a;transform:scaleX(0.9140);transform-origin:left center;">Amelia Ben</div>
<div class="t" style="left:477.20px;top:207.22px;font-size:10.3px;color:#2a2a2a;-webkit-text-stroke:0.12px #2a2a2a;transform:scaleX(0.9350);transform-origin:left center;">ameliaben@o365droid.onmicrosoft.com</div>
<div class="t" style="left:695.50px;top:207.22px;font-size:10.3px;color:#2a2a2a;-webkit-text-stroke:0.12px #2a2a2a;transform:scaleX(0.9030);transform-origin:left center;">2 Methods (Software One Time Passcode, ...</div>
<div class="a" style="left:913.4px;top:203.84px;width:44.10px;height:14.30px;background:#fdecec;border-radius:2px"></div>
<div class="t" style="left:919.50px;top:208.38px;font-size:8.7px;color:#e0655e;">Disabled</div>
<div class="a" style="left:280.5px;top:237.95999999999998px;width:11.50px;height:11.50px;border:1.2px solid #dadada;border-radius:2.5px;background:#fff"></div>
<svg style="left:300.4px;top:239.95999999999998px" width="10.4" height="10.4" viewBox="0 0 10.4 10.4" ><path d="M7.3 0.6 Q7.7 0.3 8.1 0.6 L9.8 2.3 Q10.1 2.7 9.8 3.1 L2.8 10 L0.3 10.3 L0.5 7.7 Z" fill="#1e1e1e"/><path d="M6.2 1.8 L8.6 4.2" stroke="#fff" stroke-width="0.6"/></svg>
<svg style="left:328.90000000000003px;top:229.65999999999997px" width="28" height="28" viewBox="0 0 28 28" ><defs><clipPath id="cf2243"><circle cx="14.4" cy="13.9" r="11.4"/></clipPath><filter id="blcf2243" x="-10%" y="-10%" width="120%" height="120%"><feGaussianBlur stdDeviation="0.45"/></filter></defs><g clip-path="url(#cf2243)"><g filter="url(#blcf2243)"><rect width="28" height="28" fill="#cfc9c2"/><path d="M6.6 21 Q5.6 3.8 14.4 3.7 Q23 3.8 21.8 21 Z" fill="#1d1612"/><circle cx="8.6" cy="21.4" r="2.4" fill="#1d1612"/><circle cx="20.6" cy="19.6" r="2.2" fill="#1d1612"/><ellipse cx="14.3" cy="14.8" rx="5.3" ry="7.4" fill="#8e5e44"/><ellipse cx="14.3" cy="19" rx="1.9" ry="0.8" fill="#e0d0c8"/><ellipse cx="11.9" cy="13.5" rx="1.1" ry="0.6" fill="#2a1a14" opacity="0.70"/><ellipse cx="16.7" cy="13.5" rx="1.1" ry="0.6" fill="#2a1a14" opacity="0.70"/><ellipse cx="14.3" cy="30.0" rx="1.6" ry="0.55" fill="#8a4a40" opacity="0.56"/></g></g><circle cx="14.4" cy="13.9" r="11.4" fill="none" stroke="#c6c8cb" stroke-width="0.9"/></svg>
<div class="t" style="left:364.60px;top:239.84px;font-size:10.3px;color:#2a2a2a;-webkit-text-stroke:0.12px #2a2a2a;transform:scaleX(0.9140);transform-origin:left center;">Andrea Dyer</div>
<div class="t" style="left:477.20px;top:239.84px;font-size:10.3px;color:#2a2a2a;-webkit-text-stroke:0.12px #2a2a2a;transform:scaleX(0.9350);transform-origin:left center;">andrea.dyer@o365droid.onmicrosoft.com</div>
<div class="t" style="left:695.50px;top:239.84px;font-size:10.3px;color:#2a2a2a;-webkit-text-stroke:0.12px #2a2a2a;transform:scaleX(0.9030);transform-origin:left center;">2 Methods (One Way SMS, Mobile Phone)</div>
<div class="a" style="left:913.4px;top:236.45999999999998px;width:46.50px;height:14.30px;background:#eff7ec;border-radius:2px"></div>
<div class="t" style="left:919.50px;top:241.00px;font-size:8.7px;color:#66a85a;">Enforced</div>
<div class="a" style="left:280.5px;top:270.5799999999999px;width:11.50px;height:11.50px;border:1.2px solid #dadada;border-radius:2.5px;background:#fff"></div>
<svg style="left:300.4px;top:272.5799999999999px" width="10.4" height="10.4" viewBox="0 0 10.4 10.4" ><path d="M7.3 0.6 Q7.7 0.3 8.1 0.6 L9.8 2.3 Q10.1 2.7 9.8 3.1 L2.8 10 L0.3 10.3 L0.5 7.7 Z" fill="#1e1e1e"/><path d="M6.2 1.8 L8.6 4.2" stroke="#fff" stroke-width="0.6"/></svg>
<svg style="left:328.90000000000003px;top:262.28px" width="28" height="28" viewBox="0 0 28 28" ><defs><clipPath id="cf3276"><circle cx="14.4" cy="13.9" r="11.4"/></clipPath><filter id="blcf3276" x="-10%" y="-10%" width="120%" height="120%"><feGaussianBlur stdDeviation="0.45"/></filter></defs><g clip-path="url(#cf3276)"><g filter="url(#blcf3276)"><rect width="28" height="28" fill="#d2d2d2"/><path d="M6.5 19 Q5.2 3.6 14.4 3.7 Q23 3.6 21.6 13 Q19 8 13 9.5 Q9.5 11 9 19 Z" fill="#1a1412"/><circle cx="8.2" cy="19.6" r="1.8" fill="#1a1412"/><ellipse cx="14.7" cy="15.3" rx="5.4" ry="7.7" fill="#d4a891"/><path d="M9.2 12.5 Q11 8.6 15 8.8 Q20 8.5 21 12 Q18 10 15 10.4 Q11 11 9.2 12.5 Z" fill="#1a1412"/><ellipse cx="12.3" cy="14.2" rx="1.1" ry="0.6" fill="#3a2420" opacity="0.60"/><ellipse cx="17.1" cy="14.2" rx="1.1" ry="0.6" fill="#3a2420" opacity="0.60"/><ellipse cx="14.7" cy="19.4" rx="1.6" ry="0.55" fill="#8a4a40" opacity="0.48"/></g></g><circle cx="14.4" cy="13.9" r="11.4" fill="none" stroke="#c6c8cb" stroke-width="0.9"/></svg>
<div class="t" style="left:364.60px;top:272.46px;font-size:10.3px;color:#2a2a2a;-webkit-text-stroke:0.12px #2a2a2a;transform:scaleX(0.9140);transform-origin:left center;">Andrea Hunter</div>
<div class="t" style="left:477.20px;top:272.46px;font-size:10.3px;color:#2a2a2a;-webkit-text-stroke:0.12px #2a2a2a;transform:scaleX(0.9350);transform-origin:left center;">andrea.hunter@o365droid.onmicrosoft.com</div>
<div class="t" style="left:695.50px;top:272.46px;font-size:10.3px;color:#2a2a2a;-webkit-text-stroke:0.12px #2a2a2a;transform:scaleX(0.9030);transform-origin:left center;">2 Methods (Software One Time Passcode, ...</div>
<div class="a" style="left:913.4px;top:269.0799999999999px;width:46.50px;height:14.30px;background:#eff7ec;border-radius:2px"></div>
<div class="t" style="left:919.50px;top:273.62px;font-size:8.7px;color:#66a85a;">Enforced</div>
<div class="a" style="left:280.5px;top:303.19999999999993px;width:11.50px;height:11.50px;border:1.2px solid #dadada;border-radius:2.5px;background:#fff"></div>
<svg style="left:300.4px;top:305.19999999999993px" width="10.4" height="10.4" viewBox="0 0 10.4 10.4" ><path d="M7.3 0.6 Q7.7 0.3 8.1 0.6 L9.8 2.3 Q10.1 2.7 9.8 3.1 L2.8 10 L0.3 10.3 L0.5 7.7 Z" fill="#1e1e1e"/><path d="M6.2 1.8 L8.6 4.2" stroke="#fff" stroke-width="0.6"/></svg>
<div class="a" style="left:331.8px;top:297.29999999999995px;width:23.00px;height:23.00px;background:#e3e7ef;border:1px solid #bfc5cf;border-radius:50%"></div>
<div class="a" style="left:341.2px;top:304.09999999999997px;width:4.20px;height:4.20px;background:#5d6b86;border-radius:50%"></div>
<div class="a" style="left:339.1px;top:309.09999999999997px;width:8.10px;height:4.40px;background:#5d6b86;border-radius:2.5px 2.5px 1px 1px"></div>
<div class="t" style="left:364.60px;top:305.08px;font-size:10.3px;color:#2a2a2a;-webkit-text-stroke:0.12px #2a2a2a;transform:scaleX(0.9140);transform-origin:left center;">Andrea Kelly</div>
<div class="t" style="left:477.20px;top:305.08px;font-size:10.3px;color:#2a2a2a;-webkit-text-stroke:0.12px #2a2a2a;transform:scaleX(0.9350);transform-origin:left center;">andrea.kelly@o365droid.onmicrosoft.com</div>
<div class="t" style="left:695.50px;top:305.08px;font-size:10.3px;color:#2a2a2a;-webkit-text-stroke:0.12px #2a2a2a;transform:scaleX(0.9030);transform-origin:left center;">4 Methods (One Way SMS, Mobile Phone, ...</div>
<div class="a" style="left:913.4px;top:301.69999999999993px;width:46.50px;height:14.30px;background:#eff7ec;border-radius:2px"></div>
<div class="t" style="left:919.50px;top:306.24px;font-size:8.7px;color:#66a85a;">Enforced</div>
<div class="a" style="left:280.5px;top:335.81999999999994px;width:11.50px;height:11.50px;border:1.2px solid #dadada;border-radius:2.5px;background:#fff"></div>
<svg style="left:300.4px;top:337.81999999999994px" width="10.4" height="10.4" viewBox="0 0 10.4 10.4" ><path d="M7.3 0.6 Q7.7 0.3 8.1 0.6 L9.8 2.3 Q10.1 2.7 9.8 3.1 L2.8 10 L0.3 10.3 L0.5 7.7 Z" fill="#1e1e1e"/><path d="M6.2 1.8 L8.6 4.2" stroke="#fff" stroke-width="0.6"/></svg>
<div class="a" style="left:331.8px;top:329.91999999999996px;width:23.00px;height:23.00px;background:#e3e7ef;border:1px solid #bfc5cf;border-radius:50%"></div>
<div class="a" style="left:341.2px;top:336.71999999999997px;width:4.20px;height:4.20px;background:#5d6b86;border-radius:50%"></div>
<div class="a" style="left:339.1px;top:341.71999999999997px;width:8.10px;height:4.40px;background:#5d6b86;border-radius:2.5px 2.5px 1px 1px"></div>
<div class="t" style="left:364.60px;top:337.70px;font-size:10.3px;color:#2a2a2a;-webkit-text-stroke:0.12px #2a2a2a;transform:scaleX(0.9140);transform-origin:left center;">Annabella Small</div>
<div class="t" style="left:477.20px;top:337.70px;font-size:10.3px;color:#2a2a2a;-webkit-text-stroke:0.12px #2a2a2a;transform:scaleX(0.9350);transform-origin:left center;">AnnabellaSmall@o365droid.onmicrosoft.c...</div>
<div class="t" style="left:695.50px;top:337.70px;font-size:10.3px;color:#2a2a2a;-webkit-text-stroke:0.12px #2a2a2a;transform:scaleX(0.9030);transform-origin:left center;">2 Methods (One Way SMS, Mobile Phone)</div>
<div class="a" style="left:913.4px;top:334.31999999999994px;width:44.10px;height:14.30px;background:#fdecec;border-radius:2px"></div>
<div class="t" style="left:919.50px;top:338.86px;font-size:8.7px;color:#e0655e;">Disabled</div>
<div class="a" style="left:280.5px;top:368.43999999999994px;width:11.50px;height:11.50px;border:1.2px solid #dadada;border-radius:2.5px;background:#fff"></div>
<svg style="left:300.4px;top:370.43999999999994px" width="10.4" height="10.4" viewBox="0 0 10.4 10.4" ><path d="M7.3 0.6 Q7.7 0.3 8.1 0.6 L9.8 2.3 Q10.1 2.7 9.8 3.1 L2.8 10 L0.3 10.3 L0.5 7.7 Z" fill="#1e1e1e"/><path d="M6.2 1.8 L8.6 4.2" stroke="#fff" stroke-width="0.6"/></svg>
<div class="a" style="left:331.8px;top:362.53999999999996px;width:23.00px;height:23.00px;background:#e3e7ef;border:1px solid #bfc5cf;border-radius:50%"></div>
<div class="a" style="left:341.2px;top:369.34px;width:4.20px;height:4.20px;background:#5d6b86;border-radius:50%"></div>
<div class="a" style="left:339.1px;top:374.34px;width:8.10px;height:4.40px;background:#5d6b86;border-radius:2.5px 2.5px 1px 1px"></div>
<div class="t" style="left:364.60px;top:370.32px;font-size:10.3px;color:#2a2a2a;-webkit-text-stroke:0.12px #2a2a2a;transform:scaleX(0.9140);transform-origin:left center;">Anne Scott</div>
<div class="t" style="left:477.20px;top:370.32px;font-size:10.3px;color:#2a2a2a;-webkit-text-stroke:0.12px #2a2a2a;transform:scaleX(0.9350);transform-origin:left center;">anne.scott@o365droid.onmicrosoft.com</div>
<div class="t" style="left:695.50px;top:370.32px;font-size:10.3px;color:#2a2a2a;-webkit-text-stroke:0.12px #2a2a2a;transform:scaleX(0.9030);transform-origin:left center;">2 Methods (Software One Time Passcode, ...</div>
<div class="a" style="left:913.4px;top:366.93999999999994px;width:44.10px;height:14.30px;background:#fdecec;border-radius:2px"></div>
<div class="t" style="left:919.50px;top:371.48px;font-size:8.7px;color:#e0655e;">Disabled</div>
<div class="a" style="left:280.5px;top:401.05999999999995px;width:11.50px;height:11.50px;border:1.2px solid #dadada;border-radius:2.5px;background:#fff"></div>
<svg style="left:300.4px;top:403.05999999999995px" width="10.4" height="10.4" viewBox="0 0 10.4 10.4" ><path d="M7.3 0.6 Q7.7 0.3 8.1 0.6 L9.8 2.3 Q10.1 2.7 9.8 3.1 L2.8 10 L0.3 10.3 L0.5 7.7 Z" fill="#1e1e1e"/><path d="M6.2 1.8 L8.6 4.2" stroke="#fff" stroke-width="0.6"/></svg>
<div class="a" style="left:331.8px;top:395.15999999999997px;width:23.00px;height:23.00px;background:#e3e7ef;border:1px solid #bfc5cf;border-radius:50%"></div>
<div class="a" style="left:341.2px;top:401.96px;width:4.20px;height:4.20px;background:#5d6b86;border-radius:50%"></div>
<div class="a" style="left:339.1px;top:406.96px;width:8.10px;height:4.40px;background:#5d6b86;border-radius:2.5px 2.5px 1px 1px"></div>
<div class="t" style="left:364.60px;top:402.94px;font-size:10.3px;color:#2a2a2a;-webkit-text-stroke:0.12px #2a2a2a;transform:scaleX(0.9140);transform-origin:left center;">Anthony Bond</div>
<div class="t" style="left:477.20px;top:402.94px;font-size:10.3px;color:#2a2a2a;-webkit-text-stroke:0.12px #2a2a2a;transform:scaleX(0.9350);transform-origin:left center;">anthony.bond@o365droid.onmicrosoft.com</div>
<div class="t" style="left:695.50px;top:402.94px;font-size:10.3px;color:#2a2a2a;-webkit-text-stroke:0.12px #2a2a2a;transform:scaleX(0.9030);transform-origin:left center;">2 Methods (Software One Time Passcode, ...</div>
<div class="a" style="left:913.4px;top:399.55999999999995px;width:44.10px;height:14.30px;background:#fdecec;border-radius:2px"></div>
<div class="t" style="left:919.50px;top:404.10px;font-size:8.7px;color:#e0655e;">Disabled</div>
<div class="a" style="left:0px;top:0px;width:1024.00px;height:1.00px;background:#000"></div>
<div class="a" style="left:0px;top:0px;width:1.00px;height:418.00px;background:#000"></div>
<div class="a" style="left:1022px;top:0px;width:1.00px;height:418.00px;background:#a8a8a8"></div>
<div class="a" style="left:1023px;top:0px;width:1.00px;height:418.00px;background:#000"></div>
<div class="a" style="left:0px;top:416px;width:1024.00px;height:1.00px;background:#6a6a6a"></div>
<div class="a" style="left:0px;top:417px;width:1024.00px;height:1.00px;background:#000"></div>
</body></html>
